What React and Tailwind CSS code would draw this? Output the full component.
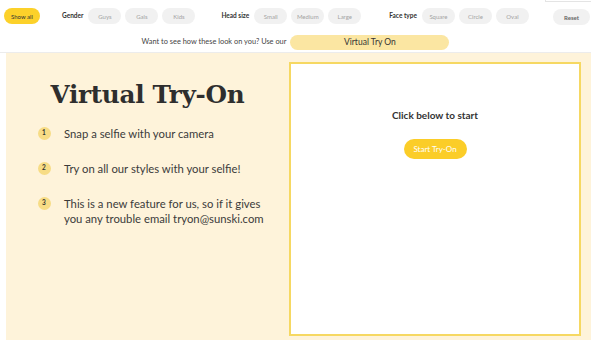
import React from 'react';

const sans = { fontFamily: '"Lato", "Liberation Sans", sans-serif' };

const Pill = ({ label, w }) => (
  <div className={`h-[16px] ${w} rounded-full bg-[#f1f1f1] text-[6px] text-[#a3a3a3] flex items-center justify-center`}>
    {label}
  </div>
);

const Group = ({ title, items, className }) => (
  <div className={`flex items-center ${className}`}>
    <span className="text-[6.5px] font-bold text-[#333] mr-[5px]">{title}</span>
    <div className="flex gap-[4px]">
      {items.map((it) => (
        <Pill key={it} label={it} w="w-[33px]" />
      ))}
    </div>
  </div>
);

const Step = ({ n, children }) => (
  <div className="flex items-start">
    <div className="w-[13px] h-[13px] mt-[0.5px] -ml-[0.5px] rounded-full bg-[#f7dc85] text-[6.5px] font-bold text-[#333] flex items-center justify-center shrink-0">
      {n}
    </div>
    <p className="ml-[13.5px] text-[11.3px] leading-[15px] text-[#3b3b3b]">{children}</p>
  </div>
);

export default function App() {
  return (
    <div className="w-[591px] h-[340px] bg-white overflow-hidden flex flex-col" style={sans}>
      <div className="relative h-[32px] flex items-center pl-[4px] pr-[1px]">
        <div className="absolute right-0 top-0 w-[46px] h-[2px] border-l border-b border-[#e4e4e4]" />
        <div className="h-[16px] w-[36px] rounded-full bg-[#fcd12a] text-[6px] text-[#333] flex items-center justify-center">
          Show all
        </div>
        <Group title="Gender" items={['Guys', 'Gals', 'Kids']} className="ml-[22px]" />
        <Group title="Head size" items={['Small', 'Medium', 'Large']} className="ml-[26px]" />
        <Group title="Face type" items={['Square', 'Circle', 'Oval']} className="ml-[28px]" />
        <div className="ml-auto h-[16px] w-[37px] mt-[2px] rounded-full bg-[#f1f1f1] text-[6px] font-bold text-[#666] flex items-center justify-center">
          Reset
        </div>
      </div>
      <div className="h-[21px] flex items-center justify-center border-b border-[#ececec]">
        <span className="text-[7.4px] text-[#444] mr-[4px]">Want to see how these look on you? Use our</span>
        <div className="h-[15px] w-[159px] rounded-full bg-[#fbe6a2] text-[8.5px] text-[#333] flex items-center justify-center">
          Virtual Try On
        </div>
      </div>
      <div className="flex-1 flex pl-[6px]">
        <div className="flex-1 flex bg-[#fef3da]">
          <div className="w-[283px] flex flex-col">
            <h1
              className="mt-[23px] text-center text-[24.7px] font-bold text-[#2e2e2e] tracking-[-0.3px]"
              style={{ fontFamily: '"DejaVu Serif", "Liberation Serif", serif' }}
            >
              Virtual Try-On
            </h1>
            <div className="mt-[13px] ml-[32px] flex flex-col gap-[20px]">
              <Step n="1">Snap a selfie with your camera</Step>
              <Step n="2">Try on all our styles with your selfie!</Step>
              <Step n="3">
                This is a new feature for us, so if it gives
                <br />
                you any trouble email tryon@sunski.com
              </Step>
            </div>
          </div>
          <div className="flex-1 mt-[9px] mb-[4px] mr-[10px] bg-white border-2 border-[#f6d862] flex flex-col items-center">
            <p className="mt-[44px] text-[10px] font-bold text-[#333]">Click below to start</p>
            <button className="mt-[16px] h-[20px] w-[63px] rounded-full bg-[#fbcd28] text-[8px] text-white">
              Start Try-On
            </button>
          </div>
        </div>
      </div>
    </div>
  );
}
